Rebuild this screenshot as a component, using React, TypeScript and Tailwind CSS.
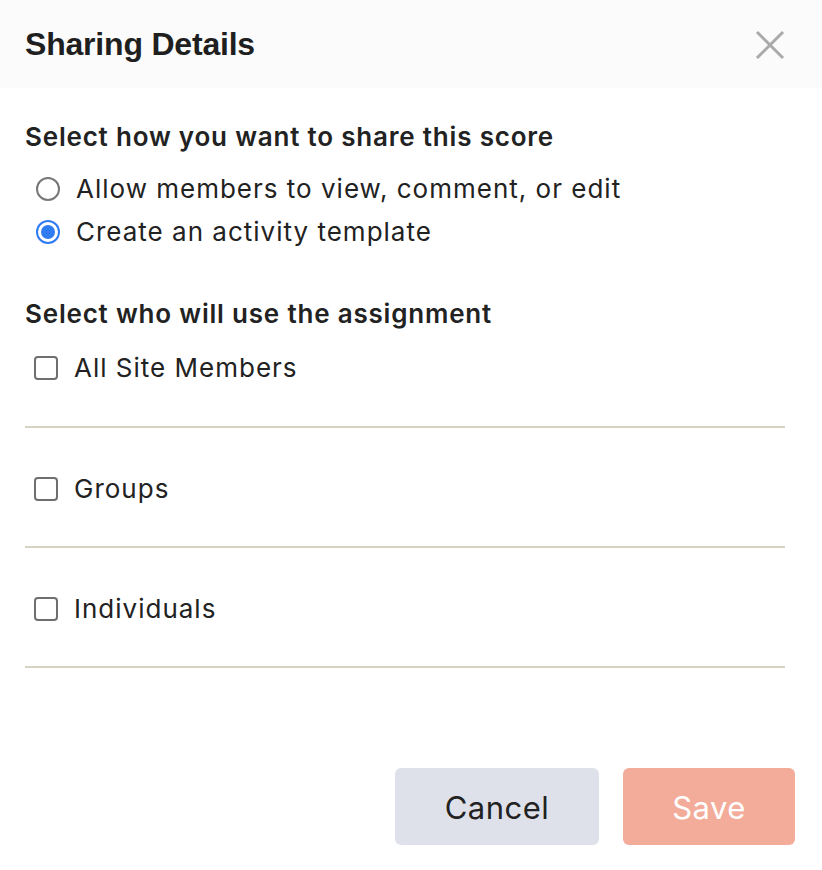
const body = { fontFamily: "Inter, 'Noto Sans', sans-serif" };

const Radio = ({ checked }: { checked?: boolean }) =>
  checked ? (
    <span className="flex h-[24px] w-[24px] items-center justify-center rounded-full border-2 border-[#2f7bf0]">
      <span className="h-[14px] w-[14px] rounded-full bg-[#2f7bf0]" />
    </span>
  ) : (
    <span className="h-[24px] w-[24px] rounded-full border-2 border-[#777]" />
  );

const Checkbox = () => (
  <span className="h-[24px] w-[24px] rounded-[4px] border-2 border-[#6f6f6f]" />
);

const targets = ["All Site Members", "Groups", "Individuals"];

export default function App() {
  return (
    <div className="h-[870px] w-[822px] bg-white text-[#222]" style={body}>
      <header className="flex h-[88px] items-center justify-between bg-[#fbfbfb] pl-[25px] pr-[37px]">
        <h1
          className="text-[32px] font-bold tracking-[-0.2px] text-[#1f1f1f]"
          style={{ fontFamily: "'Liberation Sans', Arial, sans-serif" }}
        >
          Sharing Details
        </h1>
        <svg width="30" height="30" viewBox="0 0 30 30" className="mt-[2px]">
          <path d="M2 2 L28 28 M28 2 L2 28" stroke="#aaa" strokeWidth="3" />
        </svg>
      </header>

      <div className="pl-[25px] pr-[37px]">
        <h2 className="mt-[33px] text-[26px] leading-[32px] font-semibold tracking-[0.8px]">
          Select how you want to share this score
        </h2>
        <div className="mt-[14px] flex flex-col">
          <label className="flex h-[43px] items-center gap-[16px] pl-[11px]">
            <Radio />
            <span className="text-[26px] tracking-[1px]">Allow members to view, comment, or edit</span>
          </label>
          <label className="flex h-[43px] items-center gap-[16px] pl-[11px]">
            <Radio checked />
            <span className="text-[26px] tracking-[1px]">Create an activity template</span>
          </label>
        </div>

        <h2 className="mt-[45px] text-[26px] leading-[32px] font-semibold tracking-[0.8px]">
          Select who will use the assignment
        </h2>

        <div className="flex flex-col">
          {targets.map((t, i) => (
            <div
              key={t}
              className={
                i === 0
                  ? "flex h-[98px] items-start border-b-2 border-[#d6d3c2] pt-[22px]"
                  : "flex h-[120px] items-start border-b-2 border-[#d6d3c2] pt-[45px]"
              }
            >
              <label className="flex items-center gap-[16px] pl-[9px]">
                <Checkbox />
                <span className="text-[26px] leading-[32px] tracking-[1px]">{t}</span>
              </label>
            </div>
          ))}
        </div>

        <div className="mt-[100px] flex justify-end gap-[24px]">
          <button className="h-[77px] w-[204px] rounded-[6px] bg-[#dfe1ea] pt-[3px] text-[31px] tracking-[0.5px] text-[#222]">
            Cancel
          </button>
          <button className="mr-[-10px] h-[77px] w-[172px] rounded-[6px] bg-[#f3ac9a] pt-[3px] text-[31px] tracking-[0.5px] text-white">
            Save
          </button>
        </div>
      </div>
    </div>
  );
}
